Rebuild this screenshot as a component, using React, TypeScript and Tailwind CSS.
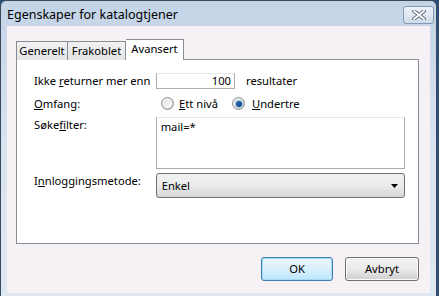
import React from "react";

const font = { fontFamily: '"Segoe UI", "Noto Sans", "Open Sans", sans-serif' };

function Radio({ checked }: { checked?: boolean }) {
  return (
    <span className="relative inline-flex h-[13px] w-[13px] shrink-0 items-center justify-center rounded-full border border-[#8e8f8f] bg-gradient-to-br from-[#f4f4f4] to-[#cfcfcf]">
      <span className="h-[9px] w-[9px] rounded-full bg-gradient-to-br from-[#e6e6e6] to-[#fafafa]" />
      {checked && (
        <span className="absolute h-[6px] w-[6px] rounded-full bg-gradient-to-br from-[#2a6fb5] to-[#0b3f7a] ring-1 ring-[#9fc2e6]" />
      )}
    </span>
  );
}

export default function App() {
  return (
    <div className="w-[439px] h-[296px] overflow-hidden bg-[#2e4e7a] text-[11.2px] leading-[14px] text-black whitespace-nowrap" style={font}>
      {/* vindusramme */}
      <div className="flex h-full w-[437px] flex-col rounded-t-[6px] border border-b-0 border-[#3c4a5c] bg-gradient-to-b from-[#c3d4e7] via-[#d9e4f1] to-[#dde8f3]">
        {/* tittellinje */}
        <div className="flex h-[25px] items-start justify-between pl-[6px] pr-[2px]">
          <span className="pt-[7px] text-[12.5px] leading-[14px]">Egenskaper for katalogtjener</span>
          <button className="mt-[5px] flex h-[18px] w-[31px] items-center justify-center rounded-[3px] border border-[#8597b4] bg-gradient-to-b from-[#eef3f9] to-[#cfdbe9]">
            <svg width="14" height="10" viewBox="0 0 14 10">
              <path d="M2 1 L12 9 M12 1 L2 9" stroke="#5b6473" strokeWidth="3.6" strokeLinecap="square" />
              <path d="M2 1 L12 9 M12 1 L2 9" stroke="#ffffff" strokeWidth="1.8" strokeLinecap="square" />
            </svg>
          </button>
        </div>

        {/* klientområde */}
        <div className="mx-[6px] mb-[3px] flex flex-1 flex-col bg-[#f5f1f5] pl-[9px] pr-[11px] pt-[13px]">
          {/* faner */}
          <div className="relative z-10 flex h-[21px] items-end">
            <div className="flex h-[19px] w-[52px] items-center justify-center border border-b-0 border-[#898c95] bg-gradient-to-b from-[#f2f2f2] to-[#e3e3e3]">Generelt</div>
            <div className="flex h-[19px] w-[58px] items-center justify-center border border-b-0 border-l-0 border-[#898c95] bg-gradient-to-b from-[#f2f2f2] to-[#e3e3e3]">Frakoblet</div>
            <div className="flex h-[21px] w-[58px] items-center justify-center border border-b-0 border-l-0 border-[#898c95] bg-white pb-[2px]">Avansert</div>
          </div>

          {/* fanepanel */}
          <div className="-mt-[1px] flex h-[185px] flex-col border border-[#898c95] bg-white pl-[17px] pr-[13px] pt-[13px]">
            <div className="flex h-[16px] items-center">
              <span className="w-[122px]">Ikke <u>r</u>eturner mer enn</span>
              <div className="flex h-[16px] w-[79px] items-center justify-end border border-[#abadb3] border-t-[#e3e9ef] px-[3px]">100</div>
              <span className="ml-[11px]">resultater</span>
            </div>

            <div className="mt-[6px] flex h-[17px] items-center">
              <span className="w-[127px]"><u>O</u>mfang:</span>
              <Radio />
              <span className="ml-[5px] w-[53px]"><u>E</u>tt nivå</span>
              <Radio checked />
              <span className="ml-[7px]"><u>U</u>ndertre</span>
            </div>

            <div className="mt-[5px] flex">
              <span className="w-[122px] pt-[1px]">Søke<u>f</u>ilter:</span>
              <div className="h-[52px] w-[250px] border border-[#abadb3] border-t-[#e3e9ef] px-[4px] pt-[2px]">mail=*</div>
            </div>

            <div className="mt-[4px] flex">
              <span className="w-[122px] pt-[1px]">I<u>n</u>nloggingsmetode:</span>
              <div className="flex h-[25px] w-[250px] items-center justify-between rounded-[3px] border border-[#707070] bg-gradient-to-b from-[#f2f2f2] via-[#ebebeb] to-[#d6d6d6] pl-[5px] pr-[6px] pt-[1px]">
                <span>Enkel</span>
                <svg width="7" height="4" viewBox="0 0 7 4">
                  <path d="M0 0 H7 L3.5 4 Z" fill="#000" />
                </svg>
              </div>
            </div>
          </div>

          {/* knapper */}
          <div className="mt-[13px] flex justify-end gap-[12px]">
            <button className="h-[24px] w-[72px] rounded-[3px] border border-[#3c7fb1] bg-gradient-to-b from-[#eaf6fd] via-[#d9f0fc] to-[#bee6fd] shadow-[inset_0_0_0_1px_#a7d9f5]">OK</button>
            <button className="h-[24px] w-[74px] rounded-[3px] border border-[#707070] bg-gradient-to-b from-[#f2f2f2] via-[#ebebeb] to-[#cfcfcf] shadow-[inset_0_0_0_1px_#fcfcfc]">Avbryt</button>
          </div>
        </div>
      </div>
    </div>
  );
}
